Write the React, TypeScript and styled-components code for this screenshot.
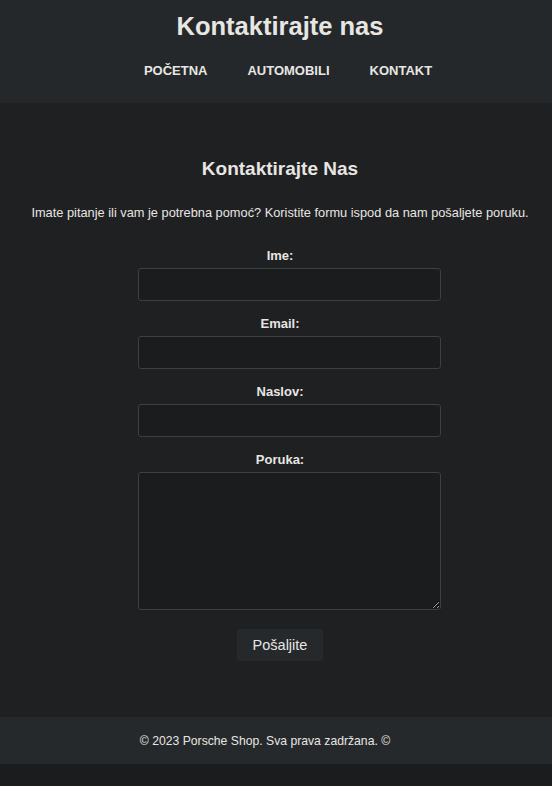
import React from 'react'
import styled, { createGlobalStyle } from 'styled-components'

const GlobalStyle = createGlobalStyle`
  html, body {
    margin: 0;
    padding: 0;
    background: #1b1c1e;
    color: #e8e6e3;
    font-family: "Liberation Sans", Arial, sans-serif;
  }
`

const StyledHeader = styled.header`
  background: #25282a;
  padding: 10px 0 24px 8px;
  text-align: center;
`

const StyledTitle = styled.h1`
  margin: 0;
  font-size: 25.5px;
  line-height: 32px;
  font-weight: bold;
  color: #e8e6e3;
`

const StyledNav = styled.nav`
  display: flex;
  justify-content: center;
  gap: 40px;
  margin-top: 21px;
  padding-left: 16px;
`

const StyledNavLink = styled.a`
  color: #e8e6e3;
  font-size: 13px;
  font-weight: bold;
  text-decoration: none;
  text-transform: uppercase;
  line-height: 16px;
`

const StyledMain = styled.main`
  background: #1f2022;
  padding: 54px 0 56px 8px;
  text-align: center;
`

const StyledHeading = styled.h2`
  margin: 0;
  font-size: 19px;
  line-height: 24px;
`

const StyledIntro = styled.p`
  margin: 24px 0 27px;
  font-size: 12.8px;
  line-height: 16px;
  white-space: nowrap;
`

const StyledForm = styled.form`
  display: flex;
  flex-direction: column;
  align-items: center;
`

const StyledField = styled.div`
  display: flex;
  flex-direction: column;
  align-items: flex-start;
  width: 285px;
  margin-bottom: 15px;
`

const StyledLabel = styled.label`
  align-self: stretch;
  text-align: center;
  font-size: 13px;
  font-weight: bold;
  line-height: 16px;
  margin-bottom: 4px;
`

/* the boxes spill past their column on the right, as width:100% plus padding does */
const StyledInput = styled.input`
  box-sizing: content-box;
  width: 100%;
  height: 15px;
  background: #1b1c1e;
  border: 1px solid #3c4043;
  border-radius: 3px;
  color: #e8e6e3;
  padding: 8px 8px;
  font: inherit;
  font-size: 13px;
  outline: none;
`

const StyledTextarea = styled.textarea`
  box-sizing: content-box;
  width: 100%;
  height: 120px;
  background: #1b1c1e;
  border: 1px solid #3c4043;
  border-radius: 3px;
  color: #e8e6e3;
  padding: 8px 8px;
  margin: 0;
  font: inherit;
  font-size: 13px;
  display: block;
  outline: none;
`

const StyledButton = styled.button`
  margin-top: 4px;
  width: 86px;
  height: 32px;
  background: #25292b;
  color: #e8e6e3;
  border: none;
  border-radius: 3px;
  font-family: "Liberation Sans", Arial, sans-serif;
  font-size: 14.5px;
  cursor: pointer;
`

const StyledFooter = styled.footer`
  background: #26292b;
  height: 47px;
  display: flex;
  align-items: center;
  justify-content: center;
  padding-right: 22px;
  font-size: 12.2px;
`

const fields = [
  { id: 'ime', label: 'Ime:', type: 'text' },
  { id: 'email', label: 'Email:', type: 'email' },
  { id: 'naslov', label: 'Naslov:', type: 'text' },
]

const App: React.FC = () => {
  return (
    <>
      <GlobalStyle />
      <StyledHeader>
        <StyledTitle>Kontaktirajte nas</StyledTitle>
        <StyledNav>
          <StyledNavLink href="#">Početna</StyledNavLink>
          <StyledNavLink href="#">Automobili</StyledNavLink>
          <StyledNavLink href="#">Kontakt</StyledNavLink>
        </StyledNav>
      </StyledHeader>
      <StyledMain>
        <StyledHeading>Kontaktirajte Nas</StyledHeading>
        <StyledIntro>
          Imate pitanje ili vam je potrebna pomoć? Koristite formu ispod da nam pošaljete poruku.
        </StyledIntro>
        <StyledForm onSubmit={(e) => e.preventDefault()}>
          {fields.map((f) => (
            <StyledField key={f.id}>
              <StyledLabel htmlFor={f.id}>{f.label}</StyledLabel>
              <StyledInput id={f.id} type={f.type} />
            </StyledField>
          ))}
          <StyledField>
            <StyledLabel htmlFor="poruka">Poruka:</StyledLabel>
            <StyledTextarea id="poruka" />
          </StyledField>
          <StyledButton type="submit">Pošaljite</StyledButton>
        </StyledForm>
      </StyledMain>
      <StyledFooter>© 2023 Porsche Shop. Sva prava zadržana. ©</StyledFooter>
    </>
  )
}

export default App
